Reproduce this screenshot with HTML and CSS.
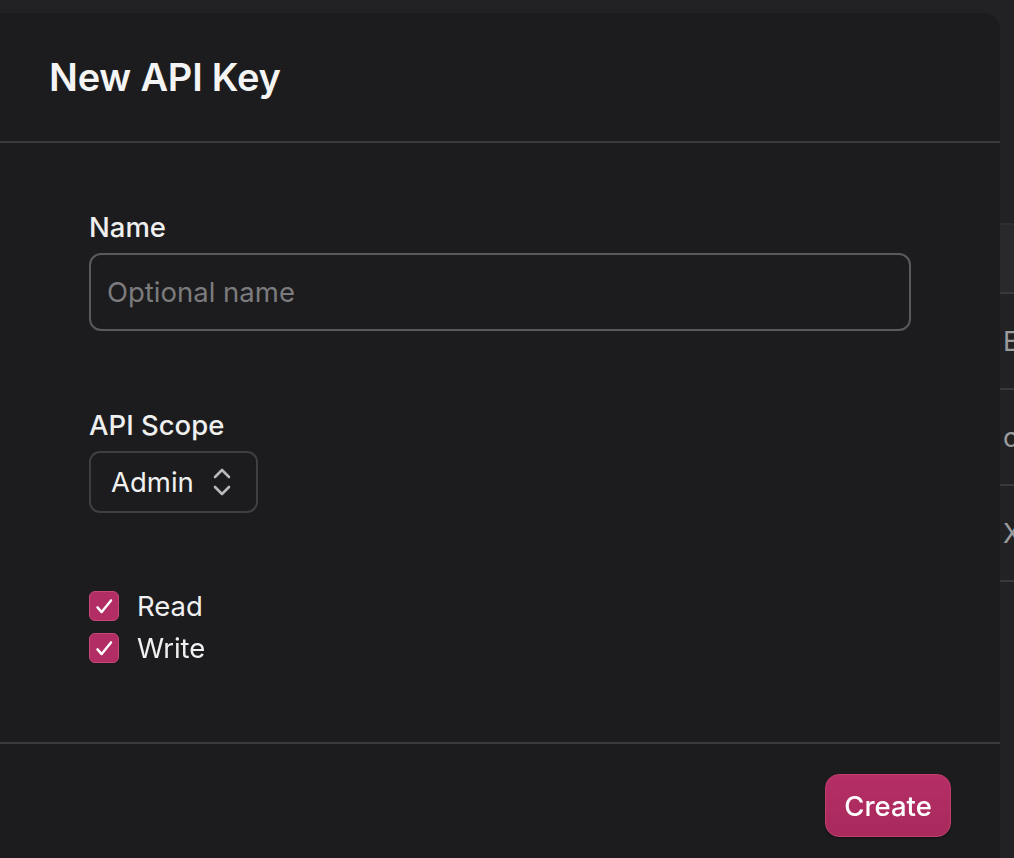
FILE: index.html
```html
<!DOCTYPE html>
<html lang="en">
<head>
<meta charset="utf-8">
<title>New API Key</title>
<link rel="stylesheet" href="styles.css">
</head>
<body>
<div class="page">
  <div class="bg-table">
    <div class="bg-head"></div>
    <div class="bg-row">E</div>
    <div class="bg-row">c</div>
    <div class="bg-row">X</div>
  </div>
</div>

<div class="modal">
  <div class="modal-header">
    <h1 class="modal-title">New API Key</h1>
  </div>
  <div class="modal-body">
    <div class="field">
      <label class="field-label" for="name">Name</label>
      <input class="text-input" id="name" type="text" placeholder="Optional name">
    </div>
    <div class="field">
      <label class="field-label">API Scope</label>
      <div class="select">
        <span>Admin</span>
        <svg class="chev" width="20" height="30" viewBox="0 0 20 30" fill="none" stroke="#b9b9bb" stroke-width="2.6" stroke-linecap="round" stroke-linejoin="round"><path d="M3 10 L10 3 L17 10"/><path d="M3 20 L10 27 L17 20"/></svg>
      </div>
    </div>
    <div class="checks">
      <label class="check"><span class="box"><svg width="30" height="30" viewBox="0 0 30 30" fill="none" stroke="#fff" stroke-width="2.6" stroke-linecap="round" stroke-linejoin="round"><path d="M8 16.5 L12.5 21.5 L22.5 9"/></svg></span>Read</label>
      <label class="check"><span class="box"><svg width="30" height="30" viewBox="0 0 30 30" fill="none" stroke="#fff" stroke-width="2.6" stroke-linecap="round" stroke-linejoin="round"><path d="M8 16.5 L12.5 21.5 L22.5 9"/></svg></span>Write</label>
    </div>
  </div>
  <div class="modal-footer">
    <button class="btn-primary">Create</button>
  </div>
</div>
</body>
</html>
```

FILE: styles.css
```css
* { box-sizing: border-box; }
html, body { margin: 0; padding: 0; }
body {
  background: #222224;
  font-family: Inter, "Noto Sans", sans-serif;
  color: #f2f2f2;
  width: 1014px;
  height: 858px;
  overflow: hidden;
}
.page { padding-top: 223px; }
.bg-table { margin-left: 1000px; }
.bg-head {
  height: 71px;
  background: #29292b;
  border-top: 2px solid #2e2e30;
  border-bottom: 2px solid #39393b;
}
.bg-row {
  height: 96px;
  border-bottom: 2px solid #39393b;
  padding-left: 3px;
  display: flex;
  align-items: center;
  font-size: 27px;
  color: #9c9c9e;
}

.modal {
  position: fixed;
  left: 0;
  top: 13px;
  width: 1000px;
  height: 860px;
  background: #1c1c1e;
  border-top-right-radius: 16px;
  display: flex;
  flex-direction: column;
}
.modal-header {
  height: 130px;
  flex: none;
  padding: 0 49px;
  display: flex;
  align-items: center;
  border-bottom: 2px solid #3a3a3c;
}
.modal-title {
  margin: 0;
  font-size: 38px;
  font-weight: 600;
  letter-spacing: -0.2px;
  color: #f4f4f4;
}
.modal-body {
  padding: 67px 89px 79px;
  display: flex;
  flex-direction: column;
  gap: 77px;
}
.field {
  display: flex;
  flex-direction: column;
  gap: 9px;
  align-items: flex-start;
}
.field-label {
  font-size: 27.5px;
  font-weight: 500;
  color: #efefef;
}
.text-input {
  width: 100%;
  height: 78px;
  border: 2px solid #5a5a5c;
  border-radius: 12px;
  background: #1c1c1e;
  padding: 0 16px;
  font-family: inherit;
  font-size: 27.5px;
  color: #f0f0f0;
  outline: none;
}
.text-input::placeholder { color: #7b7b7d; }
.select {
  height: 62px;
  width: 169px;
  border: 2px solid #3f3f41;
  border-radius: 11px;
  padding: 0 24px 0 20px;
  display: flex;
  align-items: center;
  justify-content: space-between;
  font-size: 27.5px;
  color: #f0f0f0;
}
.chev { display: block; }
.checks {
  display: flex;
  flex-direction: column;
  gap: 12px;
  margin-top: 1px;
}
.check {
  display: flex;
  align-items: center;
  gap: 18px;
  font-size: 27.5px;
  color: #f0f0f0;
  height: 30px;
}
.box {
  width: 30px;
  height: 30px;
  border-radius: 6px;
  background: #b22d63;
  border: 1px solid #c8477a;
  display: flex;
  align-items: center;
  justify-content: center;
  flex: none;
}
.box svg { display: block; }
.modal-footer {
  border-top: 2px solid #3a3a3c;
  padding: 30px 49px 0 0;
  display: flex;
  justify-content: flex-end;
}
.btn-primary {
  width: 126px;
  height: 63px;
  border-radius: 14px;
  border: 1px solid #c0406f;
  background: linear-gradient(#b52e66, #a82a5c);
  color: #fff;
  font-family: inherit;
  font-size: 27.5px;
  font-weight: 500;
  box-shadow: 0 1px 2px rgba(0,0,0,0.4);
}
```
